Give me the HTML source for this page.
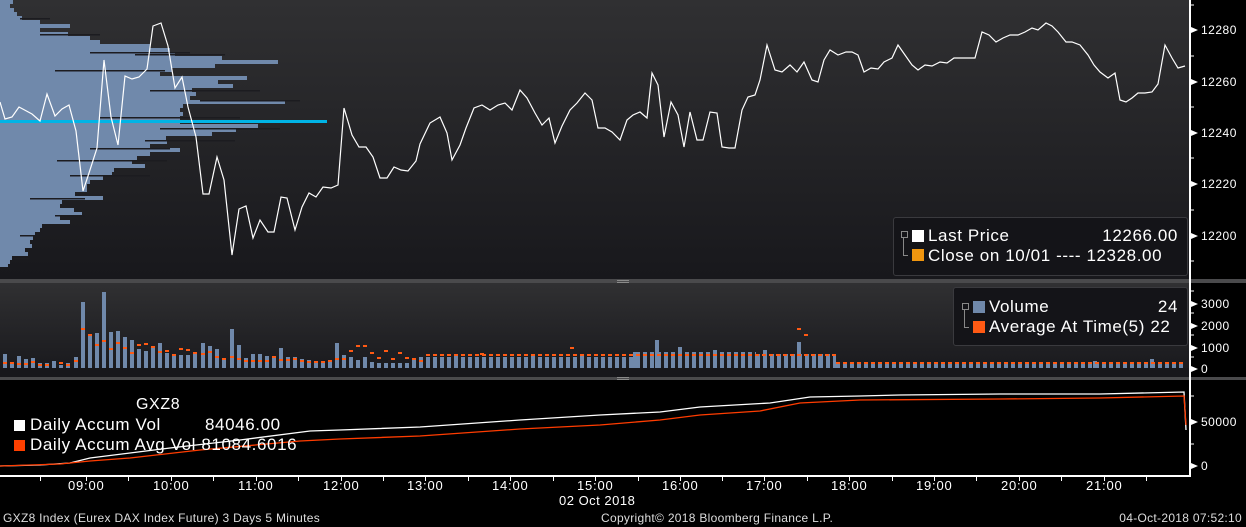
<!DOCTYPE html>
<html><head><meta charset="utf-8"><style>
body{margin:0;width:1246px;height:527px;background:#000;overflow:hidden;font-family:"Liberation Sans",sans-serif;position:relative}
.p{position:absolute;left:0;width:1190px}
.t{position:absolute;color:#fff;white-space:pre}
.L{font-size:17px;letter-spacing:0.6px}
.vb{position:absolute;background:repeating-linear-gradient(90deg,#7089ab 0 4px,transparent 4px 7px)}
</style></head><body>
<div class="p" style="top:0;height:279px;background:linear-gradient(#303032,#18181c)"></div>
<div style="position:absolute;left:0;top:279px;width:1246px;height:4px;background:#4a4a4c"></div>
<div class="p" style="top:283px;height:94px;background:linear-gradient(#303032,#18181c)"></div>
<div style="position:absolute;left:0;top:377px;width:1246px;height:3px;background:#4a4a4c"></div>
<div style="position:absolute;left:1189px;top:0;width:2px;height:477px;background:#fff"></div>
<div style="position:absolute;left:0;top:475px;width:1190px;height:2px;background:#fff"></div>

<svg width="1246" height="527" style="position:absolute;left:0;top:0">
<g fill="#7089ab">
<rect x="0" y="0" width="13" height="4"/><rect x="0" y="4" width="10" height="4"/><rect x="0" y="8" width="14" height="4"/><rect x="0" y="12" width="17" height="4"/><rect x="0" y="16" width="22" height="4"/><rect x="0" y="20" width="40" height="4"/><rect x="0" y="24" width="70" height="4"/><rect x="0" y="28" width="40" height="4"/><rect x="0" y="32" width="68" height="4"/><rect x="0" y="36" width="90" height="4"/><rect x="0" y="40" width="100" height="4"/><rect x="0" y="44" width="150" height="4"/><rect x="0" y="48" width="170" height="4"/><rect x="0" y="52" width="175" height="4"/><rect x="0" y="56" width="222" height="4"/><rect x="0" y="60" width="278" height="4"/><rect x="0" y="64" width="215" height="4"/><rect x="0" y="68" width="172" height="4"/><rect x="0" y="72" width="160" height="4"/><rect x="0" y="76" width="247" height="4"/><rect x="0" y="80" width="218" height="4"/><rect x="0" y="84" width="233" height="4"/><rect x="0" y="88" width="192" height="4"/><rect x="0" y="92" width="196" height="4"/><rect x="0" y="96" width="190" height="4"/><rect x="0" y="100" width="285" height="4"/><rect x="0" y="104" width="183" height="4"/><rect x="0" y="108" width="180" height="4"/><rect x="0" y="112" width="183" height="4"/><rect x="0" y="116" width="180" height="4"/><rect x="0" y="120" width="180" height="4"/><rect x="0" y="124" width="258" height="4"/><rect x="0" y="128" width="236" height="4"/><rect x="0" y="132" width="212" height="4"/><rect x="0" y="136" width="166" height="4"/><rect x="0" y="140" width="167" height="4"/><rect x="0" y="144" width="150" height="4"/><rect x="0" y="148" width="180" height="4"/><rect x="0" y="152" width="150" height="4"/><rect x="0" y="156" width="137" height="4"/><rect x="0" y="160" width="132" height="4"/><rect x="0" y="164" width="145" height="4"/><rect x="0" y="168" width="114" height="4"/><rect x="0" y="172" width="112" height="4"/><rect x="0" y="176" width="103" height="4"/><rect x="0" y="180" width="90" height="4"/><rect x="0" y="184" width="87" height="4"/><rect x="0" y="188" width="87" height="4"/><rect x="0" y="192" width="75" height="4"/><rect x="0" y="196" width="103" height="4"/><rect x="0" y="200" width="62" height="4"/><rect x="0" y="204" width="60" height="4"/><rect x="0" y="208" width="74" height="4"/><rect x="0" y="212" width="82" height="4"/><rect x="0" y="216" width="60" height="4"/><rect x="0" y="220" width="70" height="4"/><rect x="0" y="224" width="42" height="4"/><rect x="0" y="228" width="40" height="4"/><rect x="0" y="232" width="35" height="4"/><rect x="0" y="236" width="33" height="4"/><rect x="0" y="240" width="30" height="4"/><rect x="0" y="244" width="32" height="4"/><rect x="0" y="248" width="25" height="4"/><rect x="0" y="252" width="28" height="4"/><rect x="0" y="256" width="12" height="4"/><rect x="0" y="260" width="10" height="4"/><rect x="0" y="264" width="8" height="3"/>
</g>
<g fill="#1c1c20">
<rect x="20" y="18" width="30" height="1.5"/><rect x="40" y="34" width="60" height="1.5"/><rect x="90" y="52" width="100" height="1.5"/><rect x="135" y="54" width="90" height="1.5"/><rect x="55" y="70" width="110" height="1.5"/><rect x="150" y="90" width="110" height="1.5"/><rect x="200" y="100" width="100" height="1.5"/><rect x="100" y="117" width="140" height="1.5"/><rect x="160" y="128" width="120" height="1.5"/><rect x="145" y="140" width="90" height="1.5"/><rect x="90" y="148" width="80" height="1.5"/><rect x="57" y="160" width="110" height="1.5"/><rect x="70" y="175" width="80" height="1.5"/><rect x="30" y="198" width="55" height="1.5"/><rect x="55" y="215" width="30" height="1.5"/><rect x="20" y="235" width="25" height="1.5"/><rect x="14" y="258" width="15" height="1.5"/>
</g>
<rect x="0" y="120" width="327" height="3" fill="#00b4e6"/>
<polyline fill="none" stroke="#fff" stroke-width="1.2" points="0,102 5,119 12,117 19,107 32,114 40,121 47,94 55,116 62,109 69,105 76,131 83,191 89,173 97,148 104,60 111,117 118,145 125,76 132,79 139,77 147,69 153,26 161,23 168,46 175,88 182,77 188,107 196,137 203,194 209,194 217,157 224,180 232,255 239,209 246,206 253,238 260,220 268,232 274,232 281,197 287,198 295,230 302,207 309,193 316,197 323,187 331,188 338,185 344,108 352,135 359,147 366,147 373,157 380,178 387,178 394,167 401,170 408,171 416,161 420,144 430,123 440,117 447,133 452,160 460,145 466,128 474,108 482,105 490,110 498,105 505,103 512,110 520,90 527,98 535,113 542,125 549,118 555,143 562,126 570,110 577,103 585,93 592,100 598,128 605,128 612,132 620,140 627,120 633,115 640,112 647,118 652,73 658,85 664,137 671,102 678,115 684,147 690,112 697,140 703,140 710,112 717,113 722,147 729,148 735,148 742,110 748,97 755,95 760,80 767,45 775,70 782,72 790,65 797,72 804,62 812,80 818,82 824,60 830,50 838,55 846,52 852,52 858,55 864,72 871,68 878,69 884,62 892,58 898,45 905,55 912,65 918,70 925,65 932,66 940,62 947,63 954,58 961,58 968,58 975,58 982,32 989,35 996,42 1003,38 1010,35 1018,35 1025,32 1032,28 1038,30 1046,23 1052,26 1058,32 1066,42 1072,42 1080,45 1088,55 1094,65 1100,72 1108,78 1115,73 1120,100 1126,102 1132,98 1138,93 1145,93 1152,92 1158,84 1165,45 1172,58 1178,68 1185,66"/>
<g fill="#7089ab">
<rect x="3" y="354" width="4" height="14"/><rect x="10" y="363" width="4" height="5"/><rect x="17" y="356" width="4" height="12"/><rect x="24" y="359" width="4" height="9"/><rect x="31" y="358" width="4" height="10"/><rect x="38" y="363" width="4" height="5"/><rect x="45" y="363" width="4" height="5"/><rect x="52" y="361" width="4" height="7"/><rect x="59" y="365" width="4" height="3"/><rect x="66" y="363" width="4" height="5"/><rect x="74" y="357" width="4" height="11"/><rect x="81" y="302" width="4" height="66"/><rect x="88" y="335" width="4" height="33"/><rect x="95" y="333" width="4" height="35"/><rect x="102" y="292" width="4" height="76"/><rect x="109" y="332" width="4" height="36"/><rect x="116" y="331" width="4" height="37"/><rect x="123" y="337" width="4" height="31"/><rect x="130" y="340" width="4" height="28"/><rect x="137" y="349" width="4" height="19"/><rect x="144" y="351" width="4" height="17"/><rect x="151" y="346" width="4" height="22"/><rect x="158" y="343" width="4" height="25"/><rect x="165" y="353" width="4" height="15"/><rect x="172" y="355" width="4" height="13"/><rect x="179" y="355" width="4" height="13"/><rect x="186" y="355" width="4" height="13"/><rect x="193" y="353" width="4" height="15"/><rect x="201" y="343" width="4" height="25"/><rect x="208" y="346" width="4" height="22"/><rect x="215" y="349" width="4" height="19"/><rect x="222" y="359" width="4" height="9"/><rect x="230" y="329" width="4" height="39"/><rect x="237" y="345" width="4" height="23"/><rect x="244" y="358" width="4" height="10"/><rect x="251" y="354" width="4" height="14"/><rect x="258" y="354" width="4" height="14"/><rect x="265" y="356" width="4" height="12"/><rect x="272" y="356" width="4" height="12"/><rect x="279" y="348" width="4" height="20"/><rect x="286" y="357" width="4" height="11"/><rect x="293" y="357" width="4" height="11"/><rect x="300" y="359" width="4" height="9"/><rect x="307" y="360" width="4" height="8"/><rect x="314" y="361" width="4" height="7"/><rect x="321" y="361" width="4" height="7"/><rect x="328" y="362" width="4" height="6"/><rect x="335" y="343" width="4" height="25"/><rect x="342" y="355" width="4" height="13"/><rect x="349" y="357" width="4" height="11"/><rect x="356" y="360" width="4" height="8"/><rect x="363" y="357" width="4" height="11"/><rect x="370" y="362" width="4" height="6"/><rect x="377" y="363" width="4" height="5"/><rect x="384" y="363" width="4" height="5"/><rect x="391" y="363" width="4" height="5"/><rect x="398" y="363" width="4" height="5"/><rect x="405" y="363" width="4" height="5"/><rect x="412" y="358" width="4" height="10"/><rect x="419" y="357" width="4" height="11"/>
<rect x="655" y="340" width="4" height="28"/><rect x="797" y="342" width="4" height="26"/><rect x="633" y="352" width="4" height="16"/><rect x="763" y="350" width="4" height="18"/><rect x="454" y="354" width="4" height="14"/><rect x="531" y="355" width="4" height="13"/><rect x="580" y="356" width="4" height="12"/><rect x="678" y="347" width="4" height="21"/><rect x="713" y="350" width="4" height="18"/><rect x="818" y="354" width="4" height="14"/><rect x="1093" y="361" width="4" height="7"/><rect x="1150" y="359" width="4" height="9"/>
</g>
<g fill="#ff5a14">
<rect x="3" y="362" width="4" height="2"/><rect x="10" y="362" width="4" height="2"/><rect x="17" y="363" width="4" height="2"/><rect x="24" y="363" width="4" height="2"/><rect x="31" y="361" width="4" height="2"/><rect x="38" y="364" width="4" height="2"/><rect x="45" y="364" width="4" height="2"/><rect x="59" y="362" width="4" height="2"/><rect x="66" y="364" width="4" height="2"/><rect x="74" y="360" width="4" height="2"/><rect x="81" y="328" width="4" height="2"/><rect x="88" y="334" width="4" height="2"/><rect x="95" y="344" width="4" height="2"/><rect x="102" y="340" width="4" height="2"/><rect x="109" y="348" width="4" height="2"/><rect x="116" y="342" width="4" height="2"/><rect x="123" y="347" width="4" height="2"/><rect x="130" y="352" width="4" height="2"/><rect x="137" y="344" width="4" height="2"/><rect x="144" y="343" width="4" height="2"/><rect x="151" y="346" width="4" height="2"/><rect x="158" y="351" width="4" height="2"/><rect x="165" y="350" width="4" height="2"/><rect x="172" y="354" width="4" height="2"/><rect x="179" y="348" width="4" height="2"/><rect x="186" y="349" width="4" height="2"/><rect x="193" y="352" width="4" height="2"/><rect x="201" y="353" width="4" height="2"/><rect x="208" y="351" width="4" height="2"/><rect x="215" y="356" width="4" height="2"/><rect x="222" y="358" width="4" height="2"/><rect x="230" y="356" width="4" height="2"/><rect x="237" y="358" width="4" height="2"/><rect x="244" y="360" width="4" height="2"/><rect x="251" y="360" width="4" height="2"/><rect x="258" y="360" width="4" height="2"/><rect x="265" y="360" width="4" height="2"/><rect x="272" y="356" width="4" height="2"/><rect x="279" y="359" width="4" height="2"/><rect x="286" y="359" width="4" height="2"/><rect x="293" y="358" width="4" height="2"/><rect x="300" y="360" width="4" height="2"/><rect x="307" y="361" width="4" height="2"/><rect x="314" y="361" width="4" height="2"/><rect x="321" y="361" width="4" height="2"/><rect x="328" y="360" width="4" height="2"/><rect x="335" y="358" width="4" height="2"/><rect x="342" y="358" width="4" height="2"/><rect x="349" y="350" width="4" height="2"/><rect x="356" y="345" width="4" height="2"/><rect x="363" y="345" width="4" height="2"/><rect x="370" y="352" width="4" height="2"/><rect x="377" y="357" width="4" height="2"/><rect x="384" y="350" width="4" height="2"/><rect x="391" y="358" width="4" height="2"/><rect x="398" y="352" width="4" height="2"/><rect x="405" y="357" width="4" height="2"/><rect x="412" y="358" width="4" height="2"/><rect x="419" y="360" width="4" height="2"/>
<rect x="797" y="328" width="4" height="2"/><rect x="804" y="334" width="4" height="2"/><rect x="570" y="347" width="4" height="2"/><rect x="480" y="353" width="4" height="2"/>
</g>
<polyline fill="none" stroke="#fff" stroke-width="1.3" points="0,466 40,465 70,463 90,458 130,453 170,448 240,440 310,431 340,430 420,427 520,420 600,415 660,412 700,407 770,403 810,397 860,396 900,395 1000,394 1100,394 1184,392 1186,430"/>
<polyline fill="none" stroke="#ff3c00" stroke-width="1.3" points="0,466 60,464 90,461 130,458 200,450 300,441 340,439 420,436 520,429 600,425 660,420 700,415 760,411 800,403 860,400 1000,399 1100,398 1184,396 1186,425"/>
</svg>
<div class="vb" style="left:426px;top:357px;height:11px;width:210px"></div>
<div class="vb" style="left:636px;top:352px;height:16px;width:120px"></div>
<div class="vb" style="left:756px;top:354px;height:14px;width:80px"></div>
<div class="vb" style="left:836px;top:363px;height:5px;width:350px"></div>
<div style="position:absolute;left:426px;top:354px;width:410px;height:2px;background:repeating-linear-gradient(90deg,#ff5a14 0 4px,transparent 4px 7px)"></div>
<div style="position:absolute;left:836px;top:362px;width:350px;height:2px;background:repeating-linear-gradient(90deg,#ff5a14 0 4px,transparent 4px 7px)"></div>
<div style="position:absolute;left:0;top:368px;width:1189px;height:9px;background:#17171b"></div>

<div style="position:absolute;left:893px;top:217px;width:293px;height:57px;border:1px solid #3a3a3e;border-radius:3px;background:#141418"></div>
<div style="position:absolute;left:903px;top:232px;width:4px;height:23px;border-left:1px solid #888;border-bottom:1px solid #888"></div>
<div style="position:absolute;left:901px;top:231px;width:5px;height:5px;border:1px solid #888;background:#141418"></div>
<div style="position:absolute;left:912px;top:230px;width:12px;height:12px;background:#fff"></div>
<div style="position:absolute;left:912px;top:249px;width:12px;height:12px;background:#f0960f"></div>
<div class="t L" style="left:928px;top:226px">Last Price</div>
<div class="t L" style="right:68px;top:226px">12266.00</div>
<div class="t L" style="left:928px;top:246px">Close on 10/01 ---- 12328.00</div>

<div style="position:absolute;left:953px;top:287px;width:233px;height:57px;border:1px solid #3a3a3e;border-radius:3px;background:#141418"></div>
<div style="position:absolute;left:964px;top:304px;width:4px;height:23px;border-left:1px solid #888;border-bottom:1px solid #888"></div>
<div style="position:absolute;left:962px;top:303px;width:5px;height:5px;border:1px solid #888;background:#141418"></div>
<div style="position:absolute;left:973px;top:301px;width:12px;height:12px;background:#7089ab"></div>
<div style="position:absolute;left:973px;top:321px;width:12px;height:12px;background:#ff5a14"></div>
<div class="t L" style="left:989px;top:297px">Volume</div>
<div class="t L" style="right:68px;top:297px">24</div>
<div class="t L" style="left:989px;top:317px">Average At Time(5) 22</div>

<div class="t" style="left:136px;top:396px;font-size:16px;letter-spacing:0.6px">GXZ8</div>
<div style="position:absolute;left:14px;top:420px;width:11px;height:11px;background:#fff"></div>
<div style="position:absolute;left:14px;top:440px;width:11px;height:11px;background:#ff4000"></div>
<div class="t L" style="left:30px;top:415px">Daily Accum Vol</div>
<div class="t L" style="left:205px;top:415px">84046.00</div>
<div class="t L" style="left:30px;top:435px">Daily Accum Avg Vol 81084.6016</div>

<div style="position:absolute;left:1201px;top:0;font-size:12px;color:#fff;letter-spacing:0.5px">
<div class="t" style="top:23px">12280</div><div class="t" style="top:75px">12260</div><div class="t" style="top:126px">12240</div><div class="t" style="top:177px">12220</div><div class="t" style="top:229px">12200</div>
<div class="t" style="top:297px">3000</div><div class="t" style="top:319px">2000</div><div class="t" style="top:341px">1000</div><div class="t" style="top:362px">0</div>
<div class="t" style="top:415px">50000</div><div class="t" style="top:459px">0</div>
</div>
<svg width="1246" height="527" style="position:absolute;left:0;top:0">
<g fill="#fff"><path d="M1191,27 l7,3 l-7,3z M1191,79 l7,3 l-7,3z M1191,130 l7,3 l-7,3z M1191,181 l7,3 l-7,3z M1191,233 l7,3 l-7,3z M1191,301 l7,3 l-7,3z M1191,323 l7,3 l-7,3z M1191,345 l7,3 l-7,3z M1191,366 l7,3 l-7,3z M1191,419 l7,3 l-7,3z M1191,463 l7,3 l-7,3z"/></g>
<g stroke="#fff" stroke-width="1">
<path d="M1191,5h3M1191,56h3M1191,107h3M1191,158h3M1191,210h3M1191,261h3M1191,291h3M1191,313h3M1191,335h3M1191,357h3M1191,396h3M1191,444h3"/>
<path d="M40.5,477v4M86.5,477v4M128.5,477v4M171.5,477v4M213.5,477v4M256.5,477v4M298.5,477v4M341.5,477v4M383.5,477v4M425.5,477v4M468.5,477v4M510.5,477v4M553.5,477v4M595.5,477v4M638.5,477v4M680.5,477v4M722.5,477v4M764.5,477v4M807.5,477v4M849.5,477v4M892.5,477v4M934.5,477v4M976.5,477v4M1019.5,477v4M1061.5,477v4M1104.5,477v4M1146.5,477v4"/>
</g>
<g fill="#8a8a8a"><rect x="617" y="280" width="12" height="1"/><rect x="617" y="282" width="12" height="1"/><rect x="617" y="377" width="12" height="1"/><rect x="617" y="379" width="12" height="1"/></g>
</svg>
<div style="position:absolute;left:0;top:478px;width:1190px;font-size:13px;color:#fff;letter-spacing:0.8px">
<span class="t" style="left:68px">09:00</span><span class="t" style="left:153px">10:00</span><span class="t" style="left:238px">11:00</span><span class="t" style="left:323px">12:00</span><span class="t" style="left:407px">13:00</span><span class="t" style="left:492px">14:00</span><span class="t" style="left:577px">15:00</span><span class="t" style="left:662px">16:00</span><span class="t" style="left:746px">17:00</span><span class="t" style="left:831px">18:00</span><span class="t" style="left:916px">19:00</span><span class="t" style="left:1001px">20:00</span><span class="t" style="left:1086px">21:00</span>
</div>
<div class="t" style="left:559px;top:493px;font-size:13px;letter-spacing:0.5px">02 Oct 2018</div>
<div class="t" style="left:3px;top:511px;font-size:12px;color:#ddd;letter-spacing:0.3px">GXZ8 Index (Eurex DAX Index Future) 3 Days 5 Minutes</div>
<div class="t" style="left:601px;top:511px;font-size:12px;color:#ddd;letter-spacing:0.3px">Copyright© 2018 Bloomberg Finance L.P.</div>
<div class="t" style="right:4px;top:511px;font-size:12px;color:#ddd;letter-spacing:0.3px">04-Oct-2018 07:52:10</div>
</body></html>
